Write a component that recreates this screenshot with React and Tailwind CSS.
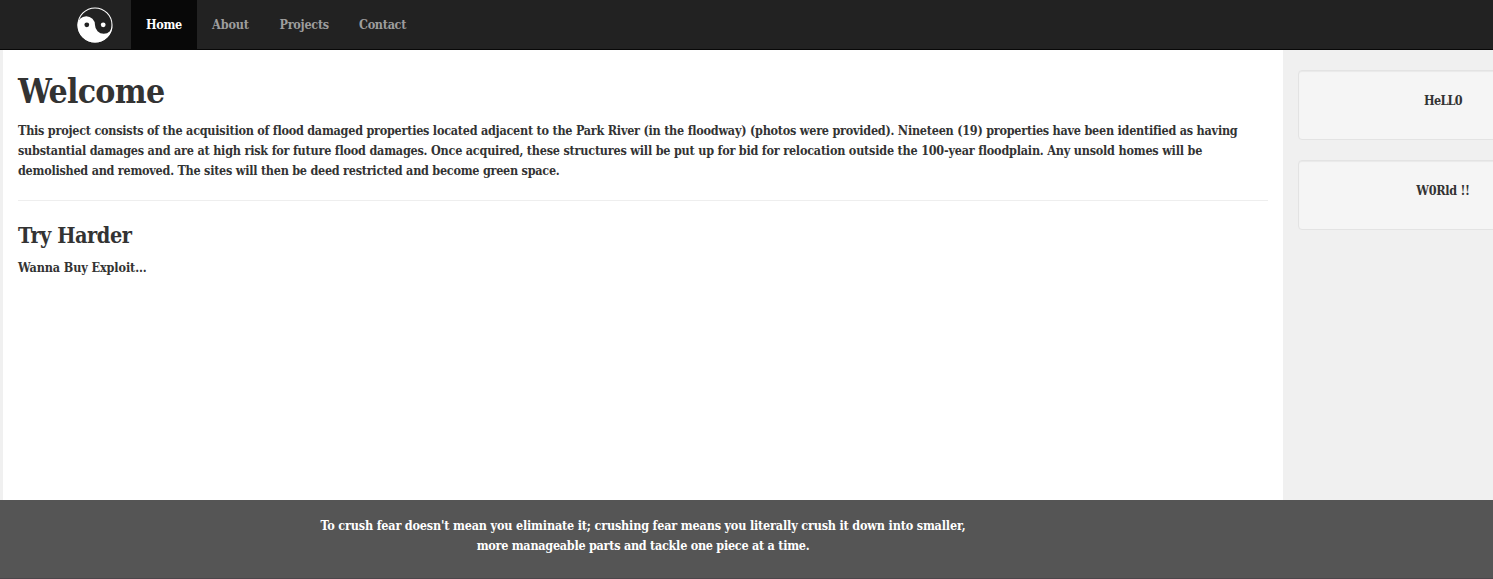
const navItems = [
  { label: 'About', className: 'w-[67.5px] tracking-[-0.1px]' },
  { label: 'Projects', className: 'w-[79.5px] tracking-[-0.26px]' },
  { label: 'Contact', className: 'w-[78px] tracking-[-0.3px]' },
];

function Logo() {
  return (
    <svg width="36" height="36" viewBox="0 0 36 36" className="block" aria-hidden="true">
      <circle cx="18" cy="18" r="17" fill="none" stroke="#fff" strokeWidth="1.1" />
      <path d="M.5 18a8.75 8.75 0 0 1 17.5 0a8.75 8.75 0 0 0 17.5 0a17.5 17.5 0 0 1-35 0Z" fill="#fff" />
      <circle cx="9.8" cy="17.8" r="2.4" fill="#222" />
      <circle cx="26.2" cy="17.8" r="2.4" fill="#fff" />
    </svg>
  );
}

export default function App() {
  return (
    <div className="flex h-[579px] w-full flex-col overflow-hidden bg-[#f0f0f0] font-['DejaVu_Serif_Condensed','DejaVu_Serif',serif] text-[12.5px] leading-5 font-bold tracking-[-0.3px] whitespace-nowrap text-[#333] [font-stretch:condensed]">
      <nav className="flex h-[50px] shrink-0 border-b border-[#080808] bg-[#222] pl-[76.5px] text-[#9d9d9d]">
        <div className="w-[54.5px] pt-[6.5px]">
          <Logo />
        </div>
        <a className="mr-[15px] w-[66px] bg-[#080808] pt-[15px] text-center tracking-[-0.35px] text-white">Home</a>
        {navItems.map(({ label, className }) => (
          <a key={label} className={`pt-[15px] ${className}`}>{label}</a>
        ))}
      </nav>
      <div className="flex h-[450px] shrink-0 pl-[3px]">
        <main className="w-[1280px] shrink-0 bg-white px-[15px] pt-[21px]">
          <h1 className="h-[50px] pt-px text-[33.5px] leading-[40px] tracking-[-0.7px]">Welcome</h1>
          <p className="h-[79px]">
            <span className="block tracking-[-0.242px]">This project consists of the acquisition of flood damaged properties located adjacent to the Park River (in the floodway) (photos were provided). Nineteen (19) properties have been identified as having</span>
            <span className="block tracking-[-0.215px]">substantial damages and are at high risk for future flood damages. Once acquired, these structures will be put up for bid for relocation outside the 100-year floodplain. Any unsold homes will be</span>
            <span className="block tracking-[-0.252px]">demolished and removed. The sites will then be deed restricted and become green space.</span>
          </p>
          <hr className="border-[#eee]" />
          <h3 className="mt-[21px] h-9 text-[21.5px] leading-[28px] tracking-[-0.45px]">Try Harder</h3>
          <p className="tracking-[-0.1px]">Wanna Buy Exploit...</p>
        </main>
        <aside className="shrink-0 space-y-5 px-[15px] pt-5 text-center">
          <div className="h-[70px] w-[290px] rounded border border-[#e3e3e3] bg-[#f5f5f5] pt-5 tracking-[-0.7px] shadow-[inset_0_1px_1px_rgba(0,0,0,0.05)]">HeLL0</div>
          <div className="h-[70px] w-[290px] rounded border border-[#e3e3e3] bg-[#f5f5f5] pt-5 shadow-[inset_0_1px_1px_rgba(0,0,0,0.05)]">W0Rld !!</div>
        </aside>
      </div>
      <footer className="flex h-[79px] flex-col border-b border-[#4b474b] bg-[#555] pt-4 text-center text-white">
        <span className="w-[1286px] tracking-[-0.18px]">To crush fear doesn't mean you eliminate it; crushing fear means you literally crush it down into smaller,</span>
        <span className="w-[1286px] tracking-[-0.266px]">more manageable parts and tackle one piece at a time.</span>
      </footer>
    </div>
  );
}
